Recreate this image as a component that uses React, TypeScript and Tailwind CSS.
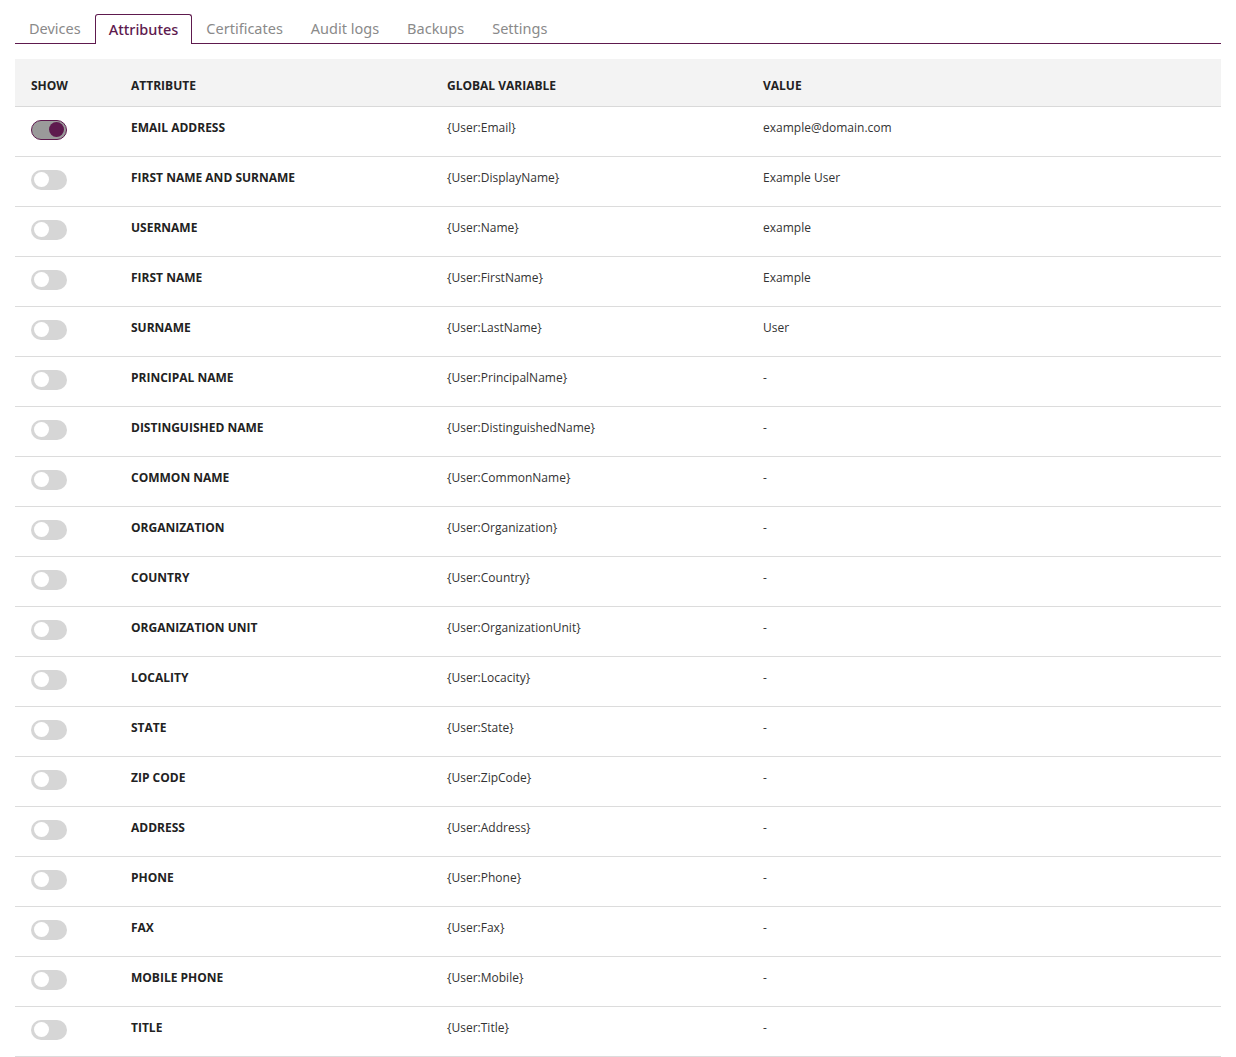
const tabs = ['Devices', 'Attributes', 'Certificates', 'Audit logs', 'Backups', 'Settings'];

const rows: [string, string, string][] = [
  ['EMAIL ADDRESS', '{User:Email}', 'example@domain.com'],
  ['FIRST NAME AND SURNAME', '{User:DisplayName}', 'Example User'],
  ['USERNAME', '{User:Name}', 'example'],
  ['FIRST NAME', '{User:FirstName}', 'Example'],
  ['SURNAME', '{User:LastName}', 'User'],
  ['PRINCIPAL NAME', '{User:PrincipalName}', '-'],
  ['DISTINGUISHED NAME', '{User:DistinguishedName}', '-'],
  ['COMMON NAME', '{User:CommonName}', '-'],
  ['ORGANIZATION', '{User:Organization}', '-'],
  ['COUNTRY', '{User:Country}', '-'],
  ['ORGANIZATION UNIT', '{User:OrganizationUnit}', '-'],
  ['LOCALITY', '{User:Locacity}', '-'],
  ['STATE', '{User:State}', '-'],
  ['ZIP CODE', '{User:ZipCode}', '-'],
  ['ADDRESS', '{User:Address}', '-'],
  ['PHONE', '{User:Phone}', '-'],
  ['FAX', '{User:Fax}', '-'],
  ['MOBILE PHONE', '{User:Mobile}', '-'],
  ['TITLE', '{User:Title}', '-'],
];

function Toggle({ on }: { on: boolean }) {
  if (on) {
    return (
      <div className="flex h-5 w-9 items-center justify-end rounded-full border border-[#5e1a4e] bg-[#9a9a9a] pr-[2px]">
        <div className="h-[15px] w-[15px] rounded-full bg-[#5e1a4e]" />
      </div>
    );
  }
  return (
    <div className="flex h-5 w-9 items-center rounded-full bg-[#d6d6d6] pl-[3px]">
      <div className="h-[15px] w-[15px] rounded-full bg-white" />
    </div>
  );
}

export default function App() {
  return (
    <div className="min-h-screen bg-white px-[15px] pt-[14px] font-['Open_Sans',sans-serif] text-[#2b2b2b]">
      <div className="flex border-b border-[#5e1a4e] font-['Noto_Sans',sans-serif] text-[14.5px]">
        {tabs.map((t) =>
          t === 'Attributes' ? (
            <div
              key={t}
              className="-mb-px flex h-[30px] items-center rounded-t-[3px] border border-b-0 border-[#5e1a4e] bg-white px-[13px] font-medium text-[#5e1a4e]"
            >
              {t}
            </div>
          ) : (
            <div key={t} className="flex h-[29px] items-center px-[14px] text-[#8a8a8a]">
              {t}
            </div>
          )
        )}
      </div>

      <table className="mt-[15px] w-full border-collapse text-[12px] leading-[18px]">
        <thead>
          <tr className="h-[47px] border-b border-[#d9d9d9] bg-[#f3f3f3] text-left font-bold text-[#222]">
            <th className="w-[100px] pl-4 pt-[7px] font-bold">SHOW</th>
            <th className="w-[316px] pl-4 pt-[7px] font-bold">ATTRIBUTE</th>
            <th className="w-[316px] pl-4 pt-[7px] font-bold">GLOBAL VARIABLE</th>
            <th className="pl-4 pt-[7px] font-bold">VALUE</th>
          </tr>
        </thead>
        <tbody>
          {rows.map(([attr, v, val], i) => (
            <tr key={attr} className="h-[50px] border-b border-[#dcdcdc] align-top">
              <td className="pl-4 pt-[13px]">
                <Toggle on={i === 0} />
              </td>
              <td className="pl-4 pt-[12px] font-bold text-[#222]">{attr}</td>
              <td className="pl-4 pt-[12px] text-[#333]">{v}</td>
              <td className="pl-4 pt-[12px] text-[#333]">{val}</td>
            </tr>
          ))}
        </tbody>
      </table>
    </div>
  );
}
